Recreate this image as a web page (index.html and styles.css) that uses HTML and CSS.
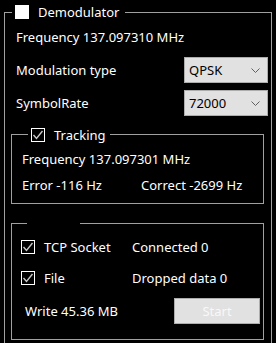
FILE: index.html
```html
<!DOCTYPE html>
<html lang="en">
<head>
    <meta charset="UTF-8">
    <meta name="viewport" content="width=device-width, initial-scale=1.0">
    <title>Demodulator</title>
    <link rel="stylesheet" href="styles.css">
</head>
<body>
    <fieldset class="group main">
        <legend class="title">
            <span class="check"></span>
            <span>Demodulator</span>
        </legend>

        <div class="line first">Frequency 137.097310 MHz</div>

        <div class="field first-field">
            <span class="label">Modulation type</span>
            <div class="combo">
                <span>QPSK</span>
                <svg class="chevron" width="9" height="5" viewBox="0 0 9 5"><path d="M0.5 0.5 L4.5 4.5 L8.5 0.5" fill="none" stroke="#606060" stroke-width="1"/></svg>
            </div>
        </div>
        <div class="field">
            <span class="label">SymbolRate</span>
            <div class="combo">
                <span>72000</span>
                <svg class="chevron" width="9" height="5" viewBox="0 0 9 5"><path d="M0.5 0.5 L4.5 4.5 L8.5 0.5" fill="none" stroke="#606060" stroke-width="1"/></svg>
            </div>
        </div>

        <!-- tracking -->
        <fieldset class="group tracking">
            <legend class="title sub">
                <span class="check on">
                    <svg width="12" height="12" viewBox="0 0 12 12"><path d="M1.5 6 L4.5 9.5 L10.5 2" fill="none" stroke="#c8c8c8" stroke-width="1.4"/></svg>
                </span>
                <span>Tracking</span>
            </legend>
            <div class="line">Frequency 137.097301 MHz</div>
            <div class="line pair">
                <span>Error -116 Hz</span>
                <span>Correct -2699 Hz</span>
            </div>
        </fieldset>

        <!-- output -->
        <fieldset class="group output">
            <legend class="blank"></legend>
            <div class="rows">
                <div class="cell">
                    <span class="check on">
                        <svg width="12" height="12" viewBox="0 0 12 12"><path d="M1.5 6 L4.5 9.5 L10.5 2" fill="none" stroke="#c8c8c8" stroke-width="1.4"/></svg>
                    </span>
                    <span>TCP Socket</span>
                </div>
                <div class="cell">Connected 0</div>

                <div class="cell">
                    <span class="check on">
                        <svg width="12" height="12" viewBox="0 0 12 12"><path d="M1.5 6 L4.5 9.5 L10.5 2" fill="none" stroke="#c8c8c8" stroke-width="1.4"/></svg>
                    </span>
                    <span>File</span>
                </div>
                <div class="cell">Dropped data 0</div>

                <div class="cell write">Write 45.36 MB</div>
                <div class="cell end"><button class="btn" disabled>Start</button></div>
            </div>
        </fieldset>
    </fieldset>
</body>
</html>
```

FILE: styles.css
```css
html, body {
    height: 100%;
    overflow: hidden;
}
body {
    margin: 0;
    background-color: #000;
    color: #fff;
    font-family: "Noto Sans", "Open Sans", sans-serif;
    font-size: 13px;
}
.group {
    border: 1px solid #a0a0a0;
    margin: 0;
    padding: 0;
    min-width: 0;
}
.main {
    margin: 4px 4px 0 4px;
    padding: 0 3px 6px 0;
}
.title {
    display: flex;
    align-items: center;
    height: 16px;
    margin-left: 7px;
    padding: 0 6px 0 3px;
}
.title.sub {
    height: 15px;
    margin-left: 6px;
    padding: 0 4px 0 3px;
}
.check {
    width: 14px;
    height: 14px;
    box-sizing: border-box;
    background-color: #fff;
    margin-right: 9px;
    flex-shrink: 0;
    display: flex;
    align-items: center;
    justify-content: center;
}
.check.on {
    background-color: #000;
    border: 1px solid #fff;
}
.line {
    height: 20px;
    line-height: 20px;
    padding-left: 11px;
    white-space: nowrap;
}
.line.first { margin-top: 7px; }
.field {
    display: flex;
    align-items: center;
    justify-content: space-between;
    height: 26px;
    margin-top: 7px;
    padding-left: 11px;
}
.field.first-field { margin-top: 10px; }
.combo {
    width: 84px;
    height: 26px;
    box-sizing: border-box;
    background-color: #e1e1e1;
    border: 1px solid #adadad;
    color: #000;
    display: flex;
    align-items: center;
    justify-content: space-between;
    padding: 0 7px 0 4px;
}
.chevron { display: block; }
.tracking {
    margin: 11px 4px 0 6px;
    padding: 0 0 8px 10px;
}
.tracking .line { padding-left: 0; margin-top: 7px; }
.tracking .pair { margin-top: 6px; }
.pair {
    display: grid;
    grid-template-columns: 119px 1fr;
}
.output {
    margin: 12px 4px 0 6px;
    padding: 0 3px 14px 9px;
}
.blank {
    width: 53px;
    height: 14px;
    margin-left: 6px;
    padding: 0;
}
.rows {
    display: grid;
    grid-template-columns: 111px 1fr;
    grid-template-rows: 20px 20px 26px;
    row-gap: 11px;
    margin-top: 7px;
}
.rows .cell:nth-child(5),
.rows .cell:nth-child(6) { margin-top: -2px; }
.cell {
    display: flex;
    align-items: center;
    white-space: nowrap;
}
.write { padding-left: 4px; }
.end { justify-content: flex-end; }
.btn {
    width: 86px;
    height: 26px;
    background-color: #e1e1e1;
    border: 1px solid #adadad;
    border-radius: 0;
    color: #f8f8f8;
    font-family: inherit;
    font-size: 13px;
    padding: 0;
}
```
